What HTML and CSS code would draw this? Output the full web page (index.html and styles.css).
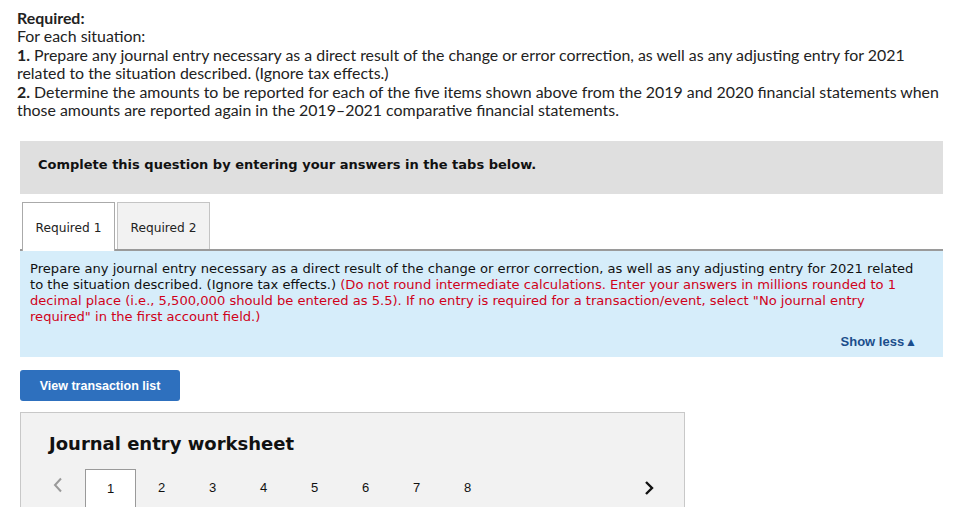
FILE: index.html
```html
<!DOCTYPE html>
<html>
<head>
<meta charset="utf-8">
<link rel="stylesheet" href="styles.css">
</head>
<body>
<div class="intro">
  <div class="b">Required:</div>
  <div>For each situation:</div>
  <div><span class="b">1.</span> Prepare any journal entry necessary as a direct result of the change or error correction, as well as any adjusting entry for 2021 related to the situation described. (Ignore tax effects.)</div>
  <div><span class="b">2.</span> Determine the amounts to be reported for each of the five items shown above from the 2019 and 2020 financial statements when those amounts are reported again in the 2019–2021 comparative financial statements.</div>
</div>
<div class="banner">Complete this question by entering your answers in the tabs below.</div>
<div class="tabs">
  <div class="tab active">Required 1</div>
  <div class="tab">Required 2</div>
</div>
<div class="panel">
  <p>Prepare any journal entry necessary as a direct result of the change or error correction, as well as any adjusting entry for 2021 related to the situation described. (Ignore tax effects.) <span class="red">(Do not round intermediate calculations. Enter your answers in millions rounded to 1 decimal place (i.e., 5,500,000 should be entered as 5.5). If no entry is required for a transaction/event, select "No journal entry required" in the first account field.)</span></p>
  <div class="showless">Show less<span class="tri">▲</span></div>
</div>
<div class="btnrow"><button class="btn">View transaction list</button></div>
<div class="worksheet">
  <h2>Journal entry worksheet</h2>
  <div class="pager">
    <span class="arrow prev"><svg width="12" height="16" viewBox="0 0 12 16"><path d="M9 1.5 L3 8 L9 14.5" fill="none" stroke="#9a9a9a" stroke-width="2"/></svg></span>
    <span class="pg cur">1</span>
    <span class="pg">2</span>
    <span class="pg">3</span>
    <span class="pg">4</span>
    <span class="pg">5</span>
    <span class="pg">6</span>
    <span class="pg">7</span>
    <span class="pg">8</span>
    <span class="spacer"></span>
    <span class="arrow next"><svg width="10" height="16" viewBox="0 0 10 16"><path d="M2 2 L8 8 L2 14" fill="none" stroke="#111" stroke-width="2.4"/></svg></span>
  </div>
</div>
</body>
</html>
```

FILE: styles.css
```css
html, body { margin: 0; padding: 0; background: #fff; }
body { font-family: "Lato", "Liberation Sans", sans-serif; color: #222; overflow: hidden; width: 973px; height: 507px; }
.intro { padding: 9px 20px 0 17px; font-size: 15.9px; line-height: 18.4px; }
.b { font-weight: bold; }
.banner { margin: 22px 30px 0 20px; height: 53px; background: #dfdfdf; box-sizing: border-box; padding: 16px 18px 0; font-family: "DejaVu Sans", Verdana, sans-serif; font-weight: bold; font-size: 13px; line-height: 16px; color: #111; }
.tabs { margin: 8px 30px 0 20px; display: flex; align-items: flex-end; border-bottom: 2px solid #9a9a9a; height: 47px; }
.tab { height: 47px; box-sizing: border-box; width: 93px; border: 1px solid #c4c4c4; border-bottom: none; background: #f2f2f2; display: flex; align-items: center; justify-content: center; padding-top: 3px; font-family: "DejaVu Sans", Verdana, sans-serif; font-size: 12.2px; color: #222; margin-left: 2px; margin-bottom: -2px; }
.tab.active { background: #fff; border-color: #aaa; height: 49px; padding-bottom: 2px; }
.tab + .tab { height: 47px; margin-bottom: 0; }
.panel { margin: 0 30px 0 20px; background: #d6edfa; padding: 10px 18px 7px 10px; font-family: "DejaVu Sans", Verdana, sans-serif; font-size: 13.1px; line-height: 16px; color: #111; }
.panel p { margin: 0; }
.red { color: #d0021b; }
.showless { text-align: right; margin-top: 9px; padding-right: 8px; font-family: "Liberation Sans", Arial, sans-serif; font-weight: bold; font-size: 13px; color: #1b4d8c; }
.tri { font-size: 12px; margin-left: 1px; }
.btnrow { margin: 13px 0 0 20px; }
.btn { display: block; width: 160px; height: 31px; background: #2e70be; color: #fff; border: none; border-radius: 3px; font-family: "Liberation Sans", Arial, sans-serif; font-weight: bold; font-size: 12.5px; padding: 0; }
.worksheet { margin: 11px 0 0 20px; width: 665px; box-sizing: border-box; border: 1px solid #c8c8c8; border-bottom: none; background: #f2f2f2; padding: 20px 0 0 28px; height: 120px; }
.worksheet h2 { margin: 0; font-family: "DejaVu Sans", Verdana, sans-serif; font-size: 18px; font-weight: bold; color: #111; line-height: 22px; }
.pager { display: flex; align-items: flex-start; margin-top: 14px; font-family: "Liberation Sans", Arial, sans-serif; font-size: 13px; color: #111; }
.arrow { display: flex; align-items: center; height: 38px; }
.prev { margin-left: 3px; width: 33px; padding-bottom: 6px; box-sizing: border-box; }
.pg { width: 51px; height: 40px; display: flex; align-items: center; justify-content: center; padding-bottom: 3px; box-sizing: border-box; }
.pg.cur { background: #fff; border: 1px solid #9a9a9a; border-bottom: none; }
.spacer { flex: 1; }
.next { margin-right: 30px; padding-bottom: 6px; }
```
